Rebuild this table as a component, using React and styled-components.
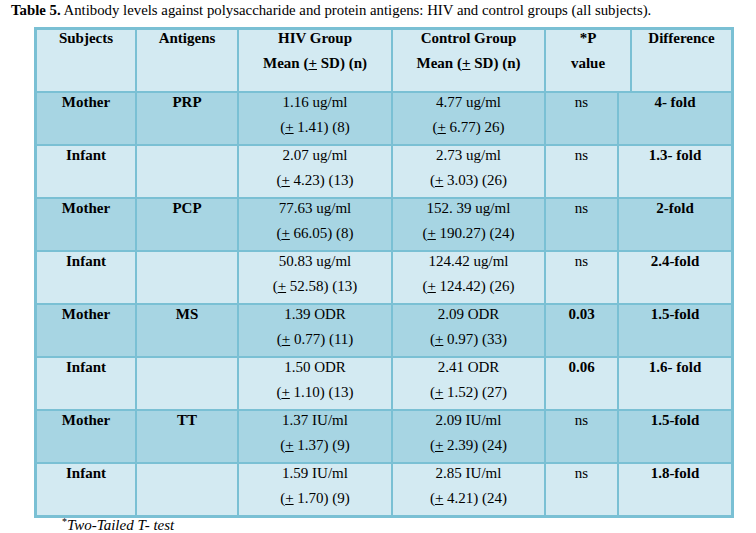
import React from "react";
import styled, { createGlobalStyle } from "styled-components";

const GlobalStyle = createGlobalStyle`
  body {
    margin: 0;
    background: #ffffff;
    font-family: "Liberation Serif", "Times New Roman", serif;
    color: #000000;
  }
`;

const Page = styled.div`
  width: 756px;
  height: 533px;
  padding: 2px 0px 0px 0px;
  box-sizing: border-box;
  overflow: hidden;
`;

const Caption = styled.div`
  padding: 0px 0px 0px 11px;
  font-size: 14.8px;
  line-height: 17px;

  b {
    font-weight: 700;
  }
`;

const Table = styled.div`
  width: 700px;
  margin: 8px 0px 0px 34px;
  box-sizing: border-box;
  border: 3px solid #7ac0d4;
  background-color: #7ac0d4;

  display: flex;
  flex-direction: column;
  gap: 2px;
`;

const Row = styled.div`
  display: grid;
  grid-template-columns: ${({ $head }) => ($head ? "98px 100px 152px 151px 84px 99px" : "98px 100px 152px 151px 71px 112px")};
  column-gap: 2px;
  height: ${({ $head }) => ($head ? "61px" : "51px")};
`;

const Cell = styled.div`
  padding: ${({ $head }) => ($head ? "0px 4px" : "1px 4px 0px 4px")};
  text-align: center;
  font-size: 15px;
  font-weight: ${({ $bold }) => ($bold ? 700 : 400)};
  background-color: ${({ $dark }) => ($dark ? "#a7d5e3" : "#d3eaf2")};
  white-space: nowrap;
`;

const Line = styled.div`
  line-height: 17px;

  & + & {
    margin-top: ${({ $gap }) => $gap || 9}px;
  }
`;

const PlusMinus = styled.span`
  text-decoration: underline;
`;

const Footnote = styled.div`
  padding: 0px 0px 0px 62px;
  font-size: 15px;
  line-height: 14px;
  font-style: italic;

  sup {
    font-size: 10px;
    font-style: normal;
    vertical-align: 5px;
    line-height: 0;
  }
`;

const rows = [
  { subject: "Mother", antigen: "PRP", hiv: ["1.16 ug/ml", "1.41) (8)"], ctrl: ["4.77 ug/ml", "6.77) 26)"], p: "ns", diff: "4- fold" },
  { subject: "Infant", antigen: "", hiv: ["2.07 ug/ml", "4.23) (13)"], ctrl: ["2.73 ug/ml", "3.03) (26)"], p: "ns", diff: "1.3- fold" },
  { subject: "Mother", antigen: "PCP", hiv: ["77.63 ug/ml", "66.05) (8)"], ctrl: ["152. 39 ug/ml", "190.27) (24)"], p: "ns", diff: "2-fold" },
  { subject: "Infant", antigen: "", hiv: ["50.83 ug/ml", "52.58) (13)"], ctrl: ["124.42 ug/ml", "124.42) (26)"], p: "ns", diff: "2.4-fold" },
  { subject: "Mother", antigen: "MS", hiv: ["1.39 ODR", "0.77) (11)"], ctrl: ["2.09 ODR", "0.97) (33)"], p: "0.03", diff: "1.5-fold" },
  { subject: "Infant", antigen: "", hiv: ["1.50 ODR", "1.10) (13)"], ctrl: ["2.41 ODR", "1.52) (27)"], p: "0.06", diff: "1.6- fold" },
  { subject: "Mother", antigen: "TT", hiv: ["1.37 IU/ml", "1.37) (9)"], ctrl: ["2.09 IU/ml", "2.39) (24)"], p: "ns", diff: "1.5-fold" },
  { subject: "Infant", antigen: "", hiv: ["1.59 IU/ml", "1.70) (9)"], ctrl: ["2.85 IU/ml", "4.21) (24)"], p: "ns", diff: "1.8-fold" },
];

const Value = ({ lines }) => (
  <>
    <Line>{lines[0]}</Line>
    <Line>
      (<PlusMinus>+</PlusMinus> {lines[1]}
    </Line>
  </>
);

const App = () => {
  return (
    <Page>
      <GlobalStyle />
      <Caption>
        <b>Table 5.</b> Antibody levels against polysaccharide and protein antigens: HIV and control groups (all subjects).
      </Caption>
      <Table>
        <Row $head>
          <Cell $head $bold>
            <Line>Subjects</Line>
          </Cell>
          <Cell $head $bold>
            <Line>Antigens</Line>
          </Cell>
          <Cell $head $bold>
            <Line>HIV Group</Line>
            <Line $gap={8}>
              Mean (<PlusMinus>+</PlusMinus> SD) (n)
            </Line>
          </Cell>
          <Cell $head $bold>
            <Line>Control Group</Line>
            <Line $gap={8}>
              Mean (<PlusMinus>+</PlusMinus> SD) (n)
            </Line>
          </Cell>
          <Cell $head $bold>
            <Line>*P</Line>
            <Line $gap={8}>value</Line>
          </Cell>
          <Cell $head $bold>
            <Line>Difference</Line>
          </Cell>
        </Row>
        {rows.map((r, i) => {
          const dark = i % 2 === 0;
          return (
            <Row key={i}>
              <Cell $dark={dark} $bold>
                <Line>{r.subject}</Line>
              </Cell>
              <Cell $dark={dark} $bold>
                <Line>{r.antigen}</Line>
              </Cell>
              <Cell $dark={dark}>
                <Value lines={r.hiv} />
              </Cell>
              <Cell $dark={dark}>
                <Value lines={r.ctrl} />
              </Cell>
              <Cell $dark={dark} $bold={r.p !== "ns"}>
                <Line>{r.p}</Line>
              </Cell>
              <Cell $dark={dark} $bold>
                <Line>{r.diff}</Line>
              </Cell>
            </Row>
          );
        })}
      </Table>
      <Footnote>
        <sup>*</sup>Two-Tailed T- test
      </Footnote>
    </Page>
  );
};

export default App;
